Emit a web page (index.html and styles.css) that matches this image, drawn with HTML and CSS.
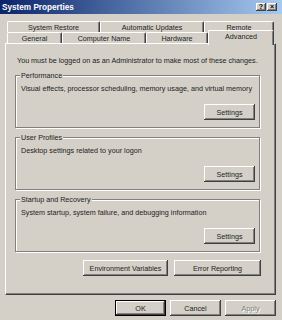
FILE: index.html
```html
<!DOCTYPE html>
<html>
<head>
<meta charset="utf-8">
<link rel="stylesheet" href="styles.css">
</head>
<body>
<div class="window">
  <div class="titlebar">
    <span class="title">System Properties</span>
    <div class="caption-btns">
      <span class="cbtn">?</span>
      <span class="cbtn">×</span>
    </div>
  </div>
  <div class="tabs">
    <div class="tab-row">
      <div class="tab w93">System Restore</div>
      <div class="tab w104">Automatic Updates</div>
      <div class="tab w70">Remote</div>
    </div>
    <div class="tab-row">
      <div class="tab w55">General</div>
      <div class="tab w84">Computer Name</div>
      <div class="tab w62">Hardware</div>
      <div class="tab active w66">Advanced</div>
    </div>
  </div>
  <div class="panel">
    <p class="intro">You must be logged on as an Administrator to make most of these changes.</p>
    <div class="group first">
      <span class="group-label">Performance</span>
      <p class="desc">Visual effects, processor scheduling, memory usage, and virtual memory</p>
      <button class="btn settings">Settings</button>
    </div>
    <div class="group">
      <span class="group-label">User Profiles</span>
      <p class="desc">Desktop settings related to your logon</p>
      <button class="btn settings">Settings</button>
    </div>
    <div class="group">
      <span class="group-label">Startup and Recovery</span>
      <p class="desc">System startup, system failure, and debugging information</p>
      <button class="btn settings">Settings</button>
    </div>
    <div class="env-row">
      <button class="btn env">Environment Variables</button>
      <button class="btn err">Error Reporting</button>
    </div>
  </div>
  <div class="dialog-buttons">
    <button class="btn dlg default">OK</button>
    <button class="btn dlg">Cancel</button>
    <button class="btn dlg disabled">Apply</button>
  </div>
</div>
</body>
</html>
```
FILE: styles.css
```css
html, body {
  margin: 0;
  background: #d4d0c8;
}
body {
  font-family: "Liberation Sans", Arial, sans-serif;
  font-size: 7.2px;
  line-height: 9px;
  color: #222;
}
.window {
  width: 282px;
  height: 320px;
}
.titlebar {
  height: 14px;
  display: flex;
  align-items: center;
  padding: 0 5px 0 2px;
  background: linear-gradient(90deg, #0a246a 0%, #a6caf0 100%);
}
.title {
  color: #fff;
  font-weight: bold;
  font-size: 8.2px;
}
.caption-btns {
  margin-left: auto;
  display: flex;
  gap: 1px;
  margin-top: -1px;
}
.cbtn {
  width: 10px;
  height: 8px;
  box-sizing: border-box;
  background: #d4d0c8;
  box-shadow: inset -1px -1px #404040, inset 1px 1px #fff, inset -2px -2px #808080;
  font-weight: bold;
  font-size: 7px;
  line-height: 8px;
  text-align: center;
  color: #000;
}
.tabs {
  padding: 7px 0 0 7px;
}
.tab-row {
  display: flex;
  height: 11px;
}
.tab {
  box-sizing: border-box;
  height: 11px;
  flex: none;
  border-top: 1px solid #fff;
  border-left: 1px solid #fff;
  border-right: 1px solid #404040;
  box-shadow: inset -1px 0 #808080;
  border-radius: 2px 2px 0 0;
  background: #d4d0c8;
  text-align: center;
  line-height: 11px;
}
.w93 { width: 93px; }
.w104 { width: 104px; }
.w70 { width: 70px; }
.w55 { width: 55px; }
.w84 { width: 84px; }
.w62 { width: 62px; }
.w66 { width: 66px; }
.tab.active {
  height: 15px;
  margin-top: -2px;
  margin-bottom: -2px;
  position: relative;
  z-index: 1;
  line-height: 12px;
}
.panel {
  box-sizing: border-box;
  margin-left: 5px;
  width: 271px;
  height: 252px;
  border-top: 1px solid #fff;
  border-left: 1px solid #fff;
  border-right: 1px solid #404040;
  border-bottom: 1px solid #404040;
  box-shadow: inset -1px -1px #808080;
  padding: 12px 0 0 9px;
}
.intro {
  margin: 0 0 0 2px;
  white-space: nowrap;
}
.group {
  box-sizing: border-box;
  width: 245px;
  height: 53px;
  margin-top: 9px;
  border: 1px solid #808080;
  box-shadow: 1px 1px #fff, inset 1px 1px #fff;
  display: flex;
  flex-direction: column;
  padding: 0 4px 7px 5px;
}
.group.first {
  margin-top: 10px;
}
.group-label {
  align-self: flex-start;
  margin: -5px 0 0 -1px;
  padding: 0 1px;
  background: #d4d0c8;
}
.desc {
  margin: 4px 0 0 0;
  white-space: nowrap;
}
.btn {
  box-sizing: border-box;
  height: 16px;
  padding: 0;
  border: none;
  background: #d4d0c8;
  font: inherit;
  color: #222;
  text-align: center;
  box-shadow: inset -1px -1px #404040, inset 1px 1px #fff, inset -2px -2px #808080;
}
.settings {
  margin-top: auto;
  align-self: flex-end;
  width: 51px;
}
.env-row {
  width: 246px;
  display: flex;
  justify-content: flex-end;
  gap: 6px;
  margin-top: 8px;
}
.env { width: 85px; }
.err { width: 87px; }
.dialog-buttons {
  display: flex;
  justify-content: flex-end;
  gap: 4px;
  padding-right: 6px;
  margin-top: 5px;
}
.dlg {
  width: 51px;
}
.dlg.default {
  border: 1px solid #000;
}
.dlg.disabled {
  color: #808080;
  text-shadow: 1px 1px #fff;
}
```
